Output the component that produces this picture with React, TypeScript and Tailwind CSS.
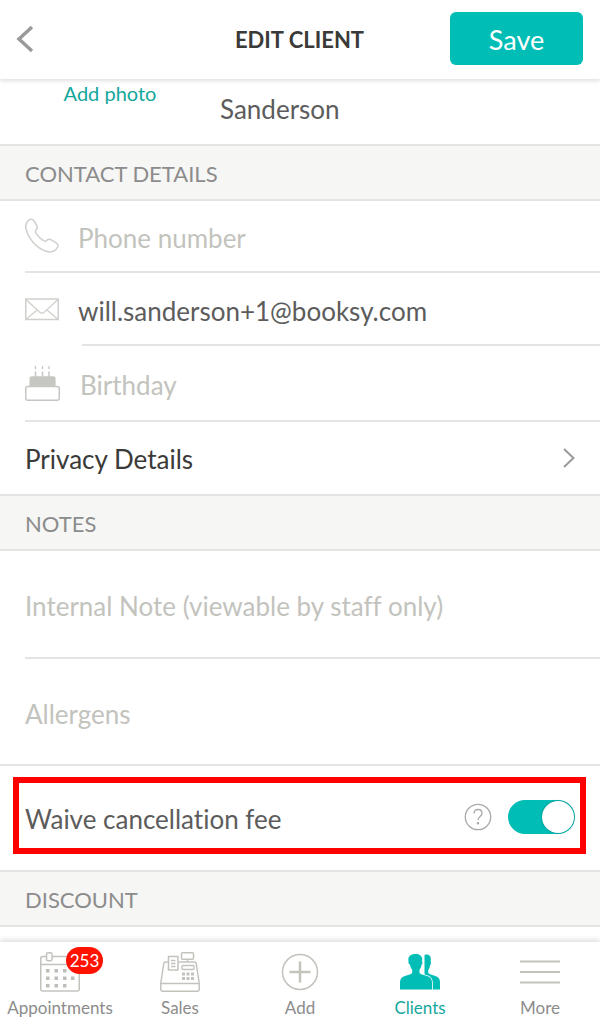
import { useState } from "react";
import type { ReactNode } from "react";
import clsx from "clsx";

function PhoneIcon() {
  return (
    <svg width="35" height="36" viewBox="0 0 35 36" fill="none" stroke="#cfcfcb" strokeWidth="1.5" strokeLinejoin="round">
      <path d="M3.500 2.300C5.500.700 7.500.900 9 2.800l2.800 4.700c.8 1.500.7 2.700-.4 3.900-1.400 1.500-1.300 2.600-.4 4 2 2.900 4.300 5.200 7.200 7.100 1.300.9 2.500.9 3.600-.1 1.500-1.300 2.800-1.400 4.400-.5l4.900 2.900c2 1.200 2.400 3 1.200 4.900-2.300 3.800-6.300 5-11 3.600C11.600 30 3.800 21.500 1.100 11.300.200 7.500 1.100 4.300 3.500 2.300z" />
    </svg>
  );
}

function MailIcon() {
  return (
    <svg width="35" height="23" viewBox="0 0 35 23" fill="none" stroke="#cfcfcb" strokeWidth="1.5">
      <rect x="0.75" y="1" width="32.5" height="20.5" />
      <path d="M1 1.500l13.500 12.500c1.700 1.500 3.300 1.500 5 0L33 1.500M1.500 21l10.500-9M32.500 21L22 12" strokeWidth="1.2" />
    </svg>
  );
}

function CakeIcon() {
  return (
    <svg width="35" height="37" viewBox="0 0 35 37" fill="none" stroke="#c6c6c2" strokeWidth="1.5">
      <path d="M10.500 6.500V12M17.500 6.500V12M24 6.500V12" />
      <path d="M10.500 1v3M17.500 1v3M24 1v3" strokeWidth="1.3" />
      <path d="M4.500 21v-7.500c0-1.500.8-2.300 2.300-2.300h21.500c1.500 0 2.300.8 2.300 2.300V21z" fill="#c6c6c2" stroke="none" />
      <rect x="0.75" y="21.5" width="33.5" height="13.7" rx="2" fill="#fff" />
    </svg>
  );
}

function CalendarIcon() {
  const dots = [
    [6, 18], [14.5, 18], [23, 18],
    [6, 25.5], [14.5, 25.5], [23, 25.5], [31, 25.5],
    [6, 33], [14.5, 33], [23, 33],
  ];

  return (
    <svg width="40" height="40" viewBox="0 0 40 40" fill="none" stroke="#c3c3be" strokeWidth="1.5">
      <rect x="0.75" y="4.5" width="38.5" height="34.5" rx="2" />
      <path d="M1 12.500h38" />
      <rect x="6.5" y="0.75" width="5.5" height="8" rx="1.5" fill="#fff" />
      <rect x="28" y="0.75" width="5.5" height="8" rx="1.5" fill="#fff" />
      {dots.map(([x, y]) => (
        <rect key={`${x}-${y}`} x={x} y={y - 1} width="3.5" height="3.5" fill="#bdbdb8" stroke="none" />
      ))}
    </svg>
  );
}

function RegisterIcon() {
  return (
    <svg width="40" height="40" viewBox="0 0 40 40" fill="none" stroke="#c3c3be" strokeWidth="1.5" strokeLinejoin="round">
      <path d="M8 10H5.500C4.500 10 4 10.500 3.800 11.500L.8 31v6.500c0 1 .5 1.700 1.500 1.700h35.400c1 0 1.500-.7 1.500-1.700V31l-3-19.500c-.2-1-.7-1.500-1.700-1.500H18.500" />
      <path d="M.8 31.500h38.400M27.500 7.500V10" />
      <rect x="8.5" y="4.5" width="9.5" height="13.5" fill="#fff" />
      <path d="M11 8.500h4.500M11 11.500h4.500M11 14.500h4.500" strokeWidth="1.3" />
      <rect x="21.5" y="0.75" width="12" height="6.5" rx="1" />
      <rect x="22" y="13.5" width="12" height="4" rx="1" />
      <path d="M22 22h3m1.500 0h3m1.500 0h3M22 26.500h3m1.500 0h3m1.500 0h3" strokeWidth="3" />
    </svg>
  );
}

function AddIcon() {
  return (
    <svg width="40" height="40" viewBox="0 0 40 40" fill="none" stroke="#c3c3be">
      <circle cx="20" cy="20" r="17.5" strokeWidth="1.5" />
      <path d="M20 9.500v21M9.500 20h21" strokeWidth="2.5" />
    </svg>
  );
}

function ClientsIcon() {
  return (
    <svg width="40" height="40" viewBox="0 0 40 40" fill="#00bdb6">
      <path d="M24.500 3c3.500-1.200 6 .2 6.300 3.500.1 1.800-.3 2.500.1 3.700.3 1.200-.1 2.300-.8 3-.3 2.200-.9 3.700-1.900 4.800v2.700c1 1.800 5.300 2.300 8.300 3.800 2.600 1.300 3.500 2.900 3.500 6V37.500H24.500z" />
      <path
        d="M8.600 9.500C7.500 4.500 10.500 2 15.500 2c4.700 0 7.500 2.500 6.600 7.500.7.700.5 2.700-.6 3.600-.4 2.200-1 3.600-2 4.700v3c1.300 2 5.300 2.200 8.900 3.800 2.800 1.300 3.600 3 3.600 6.400v6.500H0V31c0-3.400.9-5.100 3.700-6.400 3.500-1.600 7.300-1.800 8.500-3.800v-3c-1-1.100-1.700-2.500-2.100-4.700-1.200-.9-2.200-2.900-1.500-3.600z"
        stroke="#fff"
        strokeWidth="1.6"
        paintOrder="stroke"
      />
    </svg>
  );
}

function MoreIcon() {
  return (
    <svg width="40" height="40" viewBox="0 0 40 40" stroke="#c3c3be" strokeWidth="2">
      <path d="M0 9.500h40M0 20h40M0 30.500h40" />
    </svg>
  );
}

function SectionTitle({ children }: { children: ReactNode }) {
  return (
    <h2 className="flex h-[57px] items-center border-y-2 border-[#e4e4e4] bg-[#f6f6f5] px-[25px] pt-0.5 text-[22px] leading-7 text-[#8c8c8c]">
      {children}
    </h2>
  );
}

const inputClass = "w-full min-w-0 bg-transparent pt-1 text-[26px] leading-8 text-[#5c5c5c] placeholder:text-[#c3c3be] outline-none";

const tabs = [
  { label: "Appointments", icon: <CalendarIcon />, badge: 253 },
  { label: "Sales", icon: <RegisterIcon /> },
  { label: "Add", icon: <AddIcon /> },
  { label: "Clients", icon: <ClientsIcon />, active: true },
  { label: "More", icon: <MoreIcon /> },
];

export default function App() {
  const [lastName, setLastName] = useState("Sanderson");
  const [email, setEmail] = useState("will.sanderson+1@booksy.com");
  const [waiveFee, setWaiveFee] = useState(true);

  return (
    <div className="flex min-h-screen flex-col bg-white font-['Lato',sans-serif] [font-variant-ligatures:none]">
      {/* Header */}
      <header className="grid h-[79px] grid-cols-[1fr_auto_1fr] items-center pr-[17px] pb-0.5 pl-4 shadow-[0_2px_4px_rgba(0,0,0,0.12)]">
        <button type="button" aria-label="Back" className="justify-self-start">
          <svg width="18" height="28" viewBox="0 0 18 28" fill="none" stroke="#9a9a9a" strokeWidth="3.5">
            <path d="M16 2L3 14l13 12" />
          </svg>
        </button>
        <h1 className="pt-0.5 text-[22px] leading-7 font-bold text-[#3a3a38]">EDIT CLIENT</h1>
        <button type="submit" form="client" className="h-[53px] w-[133px] justify-self-end rounded-md bg-[#00bdb6] pt-0.5 text-[27px] leading-8 text-white">
          Save
        </button>
      </header>

      <form id="client" onSubmit={(e) => e.preventDefault()}>
        <div className="flex h-[65px] items-start">
          <div className="flex w-[220px] justify-center pt-0.5">
            <button type="button" className="text-[20px] leading-6 text-[#14a79c]">Add photo</button>
          </div>
          <input aria-label="Last name" value={lastName} onChange={(e) => setLastName(e.target.value)} className={clsx(inputClass, "mt-2.5 flex-1")} />
        </div>

        {/* Contact details */}
        <SectionTitle>CONTACT DETAILS</SectionTitle>
        <label className="ml-[25px] flex h-[72px] items-center border-b-2 border-[#e4e4e4]">
          <span className="w-[53px] shrink-0"><PhoneIcon /></span>
          <input type="tel" aria-label="Phone number" placeholder="Phone number" className={inputClass} />
        </label>
        <label className="ml-[25px] flex h-[73px] items-stretch">
          <span className="flex w-[53px] shrink-0 items-center"><MailIcon /></span>
          <span className="ml-1 flex flex-1 items-center border-b-2 border-[#e4e4e4]">
            <input type="email" aria-label="Email" value={email} onChange={(e) => setEmail(e.target.value)} className={clsx(inputClass, "-ml-1")} />
          </span>
        </label>
        <label className="ml-[25px] flex h-[76px] items-center border-b-2 border-[#e4e4e4]">
          <span className="w-[55px] shrink-0"><CakeIcon /></span>
          <input aria-label="Birthday" placeholder="Birthday" className={inputClass} />
        </label>
        <button type="button" className="flex h-[72px] w-full items-center justify-between px-[25px] text-[26px] leading-8 text-[#3a3a38]">
          <span className="pt-0.5">Privacy Details</span>
          <svg width="12" height="20" viewBox="0 0 12 20" fill="none" stroke="#9a9a9a" strokeWidth="2">
            <path d="M1 1l9.500 9L1 19" />
          </svg>
        </button>

        {/* Notes */}
        <SectionTitle>NOTES</SectionTitle>
        <div className="ml-[25px] flex h-[108px] items-center border-b-2 border-[#e4e4e4]">
          <input aria-label="Internal note" placeholder="Internal Note (viewable by staff only)" className={inputClass} />
        </div>
        <div className="flex h-[107px] items-center border-b-2 border-[#e4e4e4] pl-[25px]">
          <input aria-label="Allergens" placeholder="Allergens" className={inputClass} />
        </div>
        <div className="pt-[11px] pr-[14px] pb-4 pl-[13px]">
          <div className="flex h-[77px] items-center border-6 border-[#ff0000] pt-0.5 pr-[5px] pl-1.5">
            <label htmlFor="waive" className="flex-1 pt-1 text-[26px] leading-8 text-[#5c5c5c]">Waive cancellation fee</label>
            <button type="button" aria-label="About cancellation fees" className="mr-4">
              <svg width="28" height="28" viewBox="0 0 28 28" fill="none" stroke="#a9a9a9" strokeWidth="1.3">
                <circle cx="14" cy="14" r="12.7" />
                <path d="M10 10.500c0-2.500 1.600-4 4-4s4 1.500 4 3.700c0 3.300-4 3.300-4 7" />
                <circle cx="14" cy="20.3" r="0.6" fill="#a9a9a9" />
              </svg>
            </button>
            <input
              id="waive"
              type="checkbox"
              role="switch"
              checked={waiveFee}
              onChange={(e) => setWaiveFee(e.target.checked)}
              className="flex h-[34px] w-[67px] appearance-none items-center rounded-full bg-[#d0d0d0] px-px before:size-8 before:rounded-full before:bg-white before:shadow-[0_0_2px_rgba(0,0,0,0.4)] checked:justify-end checked:bg-[#00bdb6]"
            />
          </div>
        </div>
        <SectionTitle>DISCOUNT</SectionTitle>
      </form>

      {/* Bottom tabs */}
      <nav className="mt-auto grid h-[82px] grid-cols-5 bg-white shadow-[0_-2px_5px_rgba(0,0,0,0.14)]">
        {tabs.map((tab) => (
          <button
            key={tab.label}
            type="button"
            className={clsx("relative flex flex-col items-center gap-1 pt-2.5 text-[17px] leading-6", tab.active ? "text-[#14a79c]" : "text-[#8c8c8c]")}
          >
            {tab.icon}
            {tab.badge && (
              <span className="absolute top-[5px] left-[66px] flex h-[27px] w-[37px] items-center justify-center rounded-full bg-[#ff1200] text-[17px] leading-5 text-white">
                {tab.badge}
              </span>
            )}
            <span>{tab.label}</span>
          </button>
        ))}
      </nav>
    </div>
  );
}
